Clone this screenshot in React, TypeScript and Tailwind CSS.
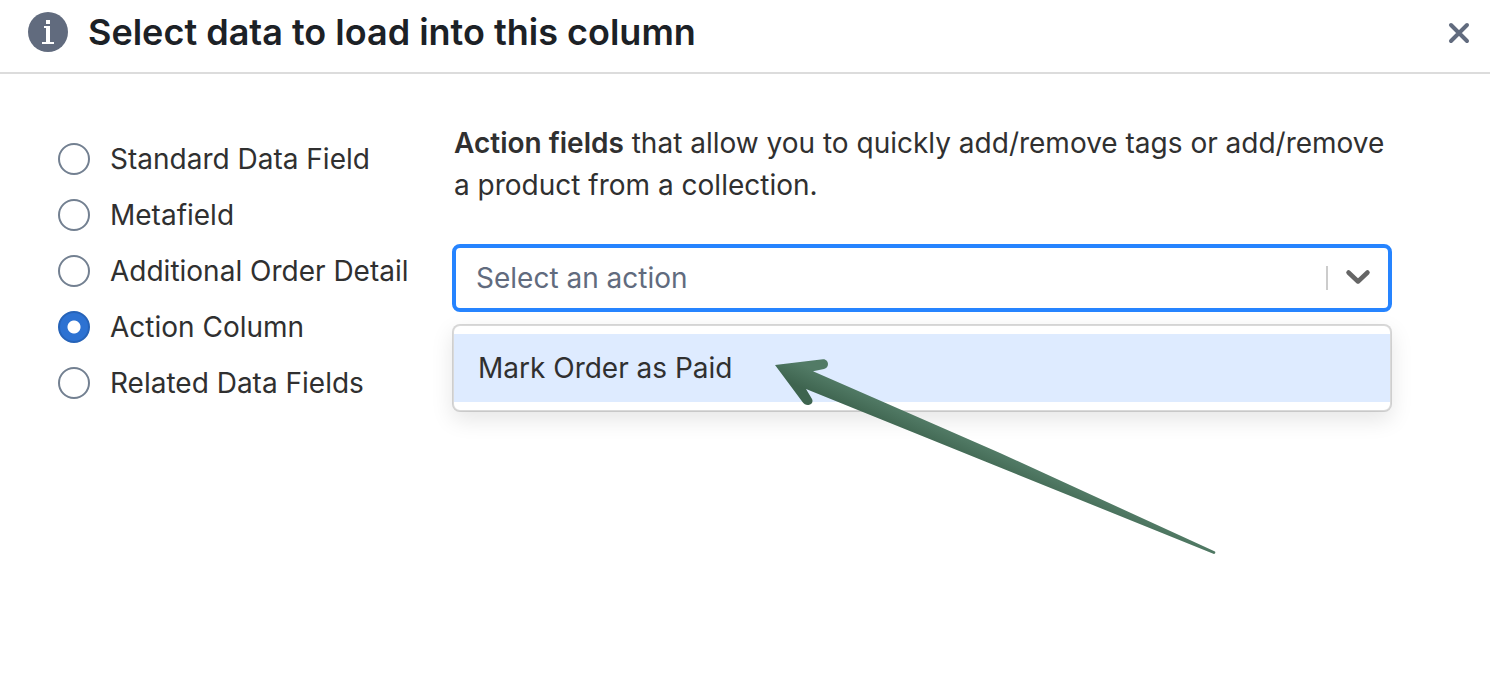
import { useState } from "react"

const columnTypes = [
    { id: "standard", label: "Standard Data Field" },
    { id: "metafield", label: "Metafield" },
    { id: "order-detail", label: "Additional Order Detail" },
    { id: "action", label: "Action Column" },
    { id: "related", label: "Related Data Fields" },
]

const actions = ["Mark Order as Paid"]

function InfoIcon() {
    return (
        <svg className="h-10 w-10 shrink-0" viewBox="0 0 40 40" aria-hidden="true">
            <circle cx="20" cy="20" r="20" fill="#616b7e" />
            <path d="M18 8h4v4h-4zM16 14h6v16h4v2H14v-2h4V16h-2z" fill="#fff" />
        </svg>
    )
}

function Arrow() {
    return (
        <svg
            className="pointer-events-none absolute top-[32px] left-[322px] h-[200px] w-[444px]"
            viewBox="774 356 444 200"
            aria-hidden="true"
        >
            <defs>
                <linearGradient id="arrow-head" gradientUnits="userSpaceOnUse" x1="815" y1="370" x2="806" y2="390">
                    <stop offset="0" stopColor="#527b66" />
                    <stop offset="1" stopColor="#3e644f" />
                </linearGradient>
            </defs>
            <path
                d="M775 365L823 359.200C826 359 828 361.500 828 364C828 366.500 826.500 368.500 824 369L813 371.300L1000 453L1215 551.500Q1216 553.500 1214 554L979 459L806 389L812 399C813.500 402 811.500 404.500 808.500 405C806 405.300 804 404 802.500 402Z"
                fill="url(#arrow-head)"
            />
        </svg>
    )
}

export default function App() {
    const [columnType, setColumnType] = useState("action")
    const [action, setAction] = useState("")

    return (
        <div className="min-h-screen bg-white font-[Inter,sans-serif] text-[28px] leading-[42px] text-[#303030]">
            {/* Header */}
            <header className="flex items-center gap-5 border-b-2 border-[#dcdcdc] px-7 pt-3 pb-5">
                <InfoIcon />
                <h1 className="text-[36px] leading-10 font-semibold text-[#1c2126]">Select data to load into this column</h1>
                <button type="button" aria-label="Close" className="-mr-4 ml-auto flex h-10 w-10 items-center justify-center">
                    <svg className="h-6 w-6" viewBox="0 0 24 24" fill="none" stroke="#616b7e" strokeWidth="4" strokeLinecap="round" aria-hidden="true">
                        <path d="M5 5l16 16M21 5L5 21" />
                    </svg>
                </button>
            </header>

            <main className="flex items-start pt-12 pr-[98px] pl-[58px]">
                {/* Column type */}
                <fieldset aria-label="Column type" className="flex w-[394px] shrink-0 flex-col gap-6 pt-[21px]">
                    {columnTypes.map((type) => (
                        <label key={type.id} className="flex h-8 items-center gap-5">
                            <input
                                type="radio"
                                name="column-type"
                                value={type.id}
                                checked={columnType === type.id}
                                onChange={() => setColumnType(type.id)}
                                className="h-8 w-8 shrink-0 appearance-none rounded-full border-2 border-[#738091] bg-white checked:border-[#2663b8] checked:bg-[radial-gradient(circle,white_6px,#2d72d2_7px)]"
                            />
                            <span>{type.label}</span>
                        </label>
                    ))}
                </fieldset>

                {/* Action picker */}
                <section className="min-w-0 flex-1">
                    <p className="px-[2px]">
                        <strong className="font-semibold">Action fields</strong> that allow you to quickly add/remove tags or
                        add/remove a product from a collection.
                    </p>

                    <div className="mt-[38px] flex h-[68px] items-center rounded-lg border-4 border-[#2684ff] bg-white">
                        <input
                            type="text"
                            role="combobox"
                            aria-label="Action"
                            aria-expanded="true"
                            aria-controls="action-list"
                            placeholder="Select an action"
                            value={action}
                            onChange={(e) => setAction(e.target.value)}
                            className="min-w-0 flex-1 px-5 outline-none placeholder:text-[#616b7e]"
                        />
                        <span className="h-6 w-[2px] bg-[#cccccc]" />
                        <button type="button" aria-label="Toggle actions" className="flex h-full w-[60px] items-center justify-center">
                            <svg className="h-7 w-7" viewBox="0 0 28 28" fill="none" stroke="#666666" strokeWidth="4.500" strokeLinecap="round" strokeLinejoin="round" aria-hidden="true">
                                <path d="M4.500 8.500L14 17.500L23.500 8.500" />
                            </svg>
                        </button>
                    </div>

                    <div className="relative mt-3">
                        <ul
                            id="action-list"
                            role="listbox"
                            aria-label="Actions"
                            className="rounded-lg border-2 border-black/15 bg-white bg-clip-padding py-2 shadow-[0_8px_22px_rgba(0,0,0,0.1)]"
                        >
                            {actions.map((name) => (
                                <li
                                    key={name}
                                    role="option"
                                    aria-selected={action === name}
                                    onClick={() => setAction(name)}
                                    className="flex h-[68px] items-center bg-[#deebff] px-6"
                                >
                                    {name}
                                </li>
                            ))}
                        </ul>
                        <Arrow />
                    </div>
                </section>
            </main>
        </div>
    )
}
